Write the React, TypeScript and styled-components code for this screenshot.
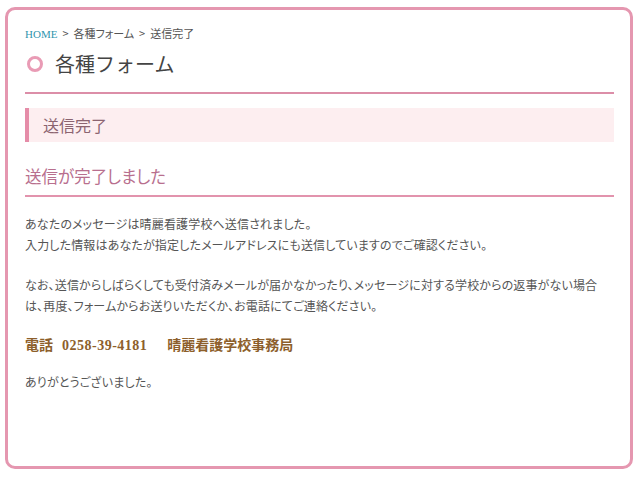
import React from 'react';
import styled, { createGlobalStyle } from 'styled-components';

const GlobalStyle = createGlobalStyle`
  body {
    margin: 0;
    background: #ffffff;
    font-family: "Noto Sans CJK JP", "Noto Sans", sans-serif;
    color: #555;
  }
`

const Frame = styled.div`
  box-sizing: border-box;
  margin: 7px 0 0 5px;
  width: 628px;
  height: 462px;
  border: 3px solid #e597b0;
  border-radius: 10px;
  padding: 14px 16px 0 17px;
`

const Crumbs = styled.nav`
  font-size: 11px;
  line-height: 18px;
  color: #555;
  font-feature-settings: "palt";
  a {
    color: #2f95ad;
    text-decoration: none;
    font-family: "Liberation Serif", serif;
  }
  span.sep {
    margin: 0 5px;
  }
`

const PageTitle = styled.h1`
  display: flex;
  align-items: center;
  gap: 12px;
  margin: 7px 0 0;
  padding: 0 0 14px 2px;
  font-size: 20px;
  font-weight: normal;
  line-height: 28px;
  color: #444;
  border-bottom: 2px solid #dc8ea8;
`

const Ring = styled.span`
  box-sizing: border-box;
  width: 16px;
  height: 16px;
  border-radius: 50%;
  border: 3px solid #e99bb5;
`

const Banner = styled.h2`
  margin: 14px 0 0;
  padding: 0 0 0 14px;
  height: 34px;
  line-height: 34px;
  background: #fdeef0;
  border-left: 4px solid #e58ca8;
  font-size: 16px;
  font-weight: normal;
  color: #8c6470;
`

const SubTitle = styled.h3`
  margin: 22px 0 0;
  padding: 0 0 7px;
  font-size: 16.5px;
  font-weight: normal;
  line-height: 24px;
  color: #b86f8e;
  font-feature-settings: "palt";
  border-bottom: 2px solid #e293ad;
`

const Text = styled.p<{ $gap?: number }>`
  margin: ${p => p.$gap ?? 20}px 0 0;
  font-size: 12px;
  line-height: 20.5px;
  letter-spacing: 0.15px;
  color: #555;
  font-feature-settings: "palt";
`

const Contact = styled.p`
  display: flex;
  margin: 20px 0 0;
  font-size: 14px;
  line-height: 20px;
  font-weight: bold;
  color: #8d5f2c;
  font-family: "Liberation Serif", "Noto Sans CJK JP", serif;
`

const ContactPart = styled.span<{ $space: number; $track?: number }>`
  margin-right: ${p => p.$space}px;
  letter-spacing: ${p => p.$track ?? 0}px;
`

export default function App() {
  return (
    <>
      <GlobalStyle />
      <Frame>
        <Crumbs>
          <a href="#">HOME</a>
          <span className="sep">&gt;</span>各種フォーム
          <span className="sep">&gt;</span>送信完了
        </Crumbs>
        <PageTitle>
          <Ring />
          各種フォーム
        </PageTitle>
        <Banner>送信完了</Banner>
        <SubTitle>送信が完了しました</SubTitle>
        <Text $gap={17}>
          あなたのメッセージは晴麗看護学校へ送信されました。<br />
          入力した情報はあなたが指定したメールアドレスにも送信していますのでご確認ください。
        </Text>
        <Text>
          なお、送信からしばらくしても受付済みメールが届かなかったり、メッセージに対する学校からの返事がない場合は、再度、フォームからお送りいただくか、お電話にてご連絡ください。
        </Text>
        <Contact>
          <ContactPart $space={9}>電話</ContactPart>
          <ContactPart $space={20} $track={0.5}>0258-39-4181</ContactPart>
          晴麗看護学校事務局
        </Contact>
        <Text $gap={16}>ありがとうございました。</Text>
      </Frame>
    </>
  );
}
